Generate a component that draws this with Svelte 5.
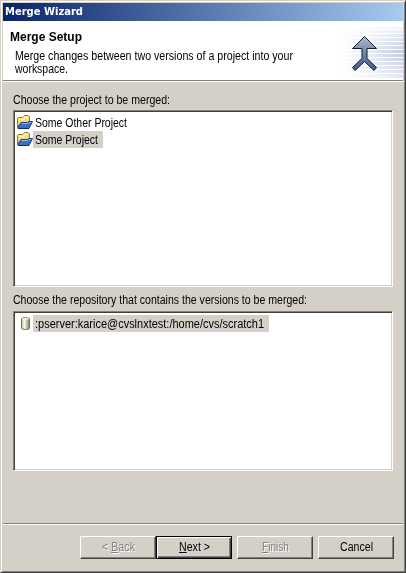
<script>
  const projects = [
    { name: 'Some Other Project', width: 92, selected: false },
    { name: 'Some Project', width: 63, selected: true }
  ];
  const buttons = [
    { before: '< ', key: 'B', after: 'ack', width: 33, disabled: true },
    { before: '', key: 'N', after: 'ext >', width: 31, primary: true },
    { before: '', key: 'F', after: 'inish', width: 27, disabled: true },
    { before: 'Cancel', key: '', after: '', width: 33 }
  ];

  // Condenses a line of text so that it spans the given number of pixels.
  function fit(node, width) {
    const natural = node.getBoundingClientRect().width;
    node.style.transform = `scaleX(${width / natural})`;
    node.style.marginRight = `${width - natural}px`;
  }
</script>

{#snippet folder()}
  <svg class="icon" width="16" height="15" viewBox="0 0 16 15">
    <path d="M.5 12V3.5L1.5 2.5H5.5L6.5 1.5L7.5 .5H11L12.5 2V8H4Z" fill="#f5dc6c" stroke="#8a7a35" />
    <path d="M2 4.5H6.5L8 2.5H11" fill="none" stroke="#fff9c8" stroke-width="1.6" />
    <path d="M.5 13L4 7.5H10.5L11.5 6.5H15.5L12 13.5H1Z" fill="#3c70c8" stroke="#1c3f88" />
    <path d="M4.6 8.5H11L12 7.5H14.2" fill="none" stroke="#92baf2" />
    <path d="M1 13.5H12" stroke="#122a5c" />
  </svg>
{/snippet}

<div class="window">
  <div class="title"><span class="fit" use:fit={78}>Merge Wizard</span></div>
  <header>
    <div class="copy">
      <h1><span class="fit" use:fit={72}>Merge Setup</span></h1>
      <p><span class="fit" use:fit={278}>Merge changes between two versions of a project into your</span></p>
      <p><span class="fit" use:fit={53}>workspace.</span></p>
    </div>
    <svg class="banner" width="63" height="59" viewBox="0 0 63 59">
      <defs>
        <linearGradient id="fade"><stop stop-color="#fff" /><stop offset=".5" stop-color="#fff" stop-opacity=".6" /><stop offset="1" stop-color="#fff" stop-opacity="0" /></linearGradient>
        <linearGradient id="stripes" x2="0" y2="1"><stop stop-color="#f3f5fa" /><stop offset=".5" stop-color="#bfc9df" /><stop offset="1" stop-color="#e4e8f2" /></linearGradient>
        <linearGradient id="arrow" gradientUnits="userSpaceOnUse" x1="30" y1="14" x2="30" y2="49"><stop stop-color="#b5bfce" /><stop offset=".45" stop-color="#7a8baa" /><stop offset="1" stop-color="#405d9b" /></linearGradient>
      </defs>
      <rect y="6" width="63" height="51" fill="url(#stripes)" />
      {#each Array(12) as _, i}<rect y={8 + i * 4} width="63" height="1" fill="#fff" />{/each}
      <rect y="6" width="63" height="53" fill="url(#fade)" />
      <path d="M24.5 15.5L36.5 27.5H27V37.5L36.5 46.5L34 49.5L24.5 40.5L15 49.5L12.5 46.5L22 37.5V27.5H12.5Z" fill="url(#arrow)" stroke="#151c30" />
    </svg>
  </header>
  <main>
    <div class="label"><span class="fit" use:fit={157}>Choose the project to be merged:</span></div>
    <div class="list projects">
      {#each projects as p}
        <div class="row">
          {@render folder()}
          <div class="name" class:selected={p.selected}><span class="fit" use:fit={p.width}>{p.name}</span></div>
        </div>
      {/each}
    </div>
    <div class="label second"><span class="fit" use:fit={294}>Choose the repository that contains the versions to be merged:</span></div>
    <div class="list repos">
      <div class="row">
        <svg class="icon" width="16" height="15" viewBox="0 0 16 15">
          <defs><linearGradient id="can"><stop stop-color="#b8b48c" /><stop offset=".35" stop-color="#fffff0" /><stop offset="1" stop-color="#858064" /></linearGradient></defs>
          <path d="M4.5 3Q4.5 1.5 8.5 1.5T12.5 3V12Q12.5 13.5 8.5 13.5T4.5 12Z" fill="url(#can)" stroke="#777258" />
          <ellipse cx="8.5" cy="2.8" rx="3.3" ry="1.1" fill="#f8f6dc" />
        </svg>
        <div class="name selected"><span class="fit" use:fit={229}>:pserver:karice@cvslnxtest:/home/cvs/scratch1</span></div>
      </div>
    </div>
  </main>
  <footer>
    {#each buttons as b}
      <button class:primary={b.primary} disabled={b.disabled}><span class="fit" use:fit={b.width}>{b.before}{#if b.key}<u>{b.key}</u>{/if}{b.after}</span></button>
    {/each}
  </footer>
</div>

<style>
  .window {
    box-sizing: border-box;
    width: 406px;
    height: 573px;
    display: flex;
    flex-direction: column;
    background: #d4d0c8;
    padding: 1px;
    border: 1px solid;
    border-color: #d4d0c8 #404040 #404040 #d4d0c8;
    box-shadow: inset 1px 1px #fff, inset -1px -1px #808080;
    font: 12px/13px "Liberation Sans", Arial, sans-serif;
    color: #000;
    white-space: nowrap;
  }
  .fit { display: inline-block; transform-origin: 0 50%; }
  .title {
    flex: none;
    height: 18px;
    margin: 1px 1px 0;
    padding-left: 2px;
    background: linear-gradient(90deg, #0a246a, #a6caf0);
    color: #fff;
    font: bold 11px/18px "DejaVu Sans", sans-serif;
  }
  header {
    flex: none;
    display: flex;
    justify-content: space-between;
    height: 59px;
    margin: 0 1px;
    background: #fff;
    border-bottom: 1px solid #808080;
  }
  .copy { padding: 10px 0 0 7px; }
  h1 { margin: 0 0 6px; font-size: 12.5px; line-height: 13px; }
  p { margin: 0 0 0 5px; }
  .banner { flex: none; }
  main { flex: 1; padding: 12px 11px 0 10px; border-top: 1px solid #fff; margin: 0 0 0 1px; }
  .label { height: 16px; }
  .label.second { margin-top: 7px; height: 17px; }
  .list {
    box-sizing: border-box;
    width: 380px;
    background: #fff;
    border: 1px solid;
    border-color: #808080 #fff #fff #808080;
    box-shadow: inset 1px 1px #404040, inset -1px -1px #d4d0c8;
    padding: 3px 3px;
  }
  .projects { height: 177px; }
  .repos { height: 160px; }
  .row { display: flex; height: 17px; }
  .icon { flex: none; margin-top: 1px; }
  .name { padding: 1px 5px 0 2px; line-height: 16px; }
  .name.selected { background: #d4d0c8; }
  footer {
    flex: none;
    height: 48px;
    margin: 0 1px;
    padding: 12px 9px 0 0;
    box-sizing: border-box;
    border-top: 1px solid #808080;
    box-shadow: inset 0 1px #fff;
    display: flex;
    justify-content: flex-end;
    gap: 5px;
  }
  button {
    box-sizing: border-box;
    width: 76px;
    height: 23px;
    margin: 0;
    padding: 0 0 1px;
    border: 1px solid;
    border-color: #fff #404040 #404040 #fff;
    box-shadow: inset -1px -1px #808080;
    background: #d4d0c8;
    font: inherit;
    color: #000;
  }
  button:first-child { margin-right: -5px; }
  button.primary { border-color: #000; box-shadow: inset 1px 1px #fff, inset -1px -1px #404040, inset -2px -2px #808080; }
  button:disabled { color: #808080; text-shadow: 1px 1px #fff; }
  u { text-underline-offset: 1px; text-decoration-thickness: 1px; }
</style>
